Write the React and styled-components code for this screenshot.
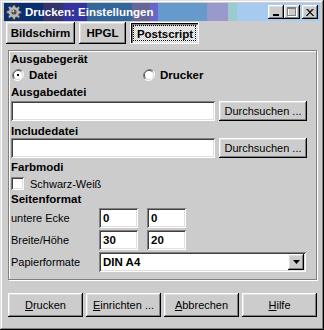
import React from "react";
import styled, { createGlobalStyle, css } from "styled-components";

const GlobalStyle = createGlobalStyle`
  html, body {
    margin: 0;
    padding: 0;
    background: #cccccc;
  }
  body {
    font-family: "Liberation Sans", Arial, sans-serif;
    font-size: 11px;
    color: #000;
  }
  * {
    box-sizing: border-box;
  }
`;

const bevel = css`
  background-color: #cccccc;
  box-shadow: inset -1px -1px #000, inset 1px 1px #fff, inset -2px -2px #808080,
    inset 2px 2px #dfdfdf;
`;

const sunken = css`
  background-color: #fff;
  box-shadow: inset 1px 1px #808080, inset -1px -1px #fff, inset 2px 2px #404040,
    inset -2px -2px #dfdfdf;
`;

const Window = styled.div`
  width: 324px;
  height: 330px;
  padding: 3px 4px 0 4px;
  background: #cccccc;
  box-shadow: inset -1px -1px #000, inset 1px 1px #dfdfdf, inset -2px -2px #808080,
    inset 2px 2px #fff;
  display: flex;
  flex-direction: column;
`;

const TitleBar = styled.div`
  height: 18px;
  display: flex;
  align-items: center;
  padding: 0 2px;
  gap: 3px;
  background: linear-gradient(
    to right,
    #0a2e6e 0 39px,
    #33336e 39px 59px,
    #3333a0 59px 83px,
    #336699 83px 128px,
    #666699 128px 146px,
    #6666cc 146px 154px,
    #6699cc 154px 203px,
    #9999cc 203px 224px,
    #99cccc 224px 233px,
    #a6caf0 233px
  );
`;

const Title = styled.span`
  flex: 1;
  color: #fff;
  font-weight: bold;
  font-size: 11.5px;
  white-space: nowrap;
`;

const Controls = styled.div`
  display: flex;
  align-items: center;
`;

const ControlButton = styled.div`
  ${bevel};
  width: 16px;
  height: 14px;
  display: flex;
  align-items: center;
  justify-content: center;
  margin-left: ${(p) => p.$gap || 0}px;
`;

const TabRow = styled.div`
  display: flex;
  gap: 4px;
  margin-top: 1px;
  padding-left: 2px;
`;

const TabButton = styled.div`
  width: ${(p) => p.$width}px;
  height: 22px;
  display: flex;
  align-items: center;
  justify-content: center;
  font-weight: bold;
  font-size: 11.5px;
  ${(p) =>
    p.$pressed
      ? css`
          border: 1px solid #fff;
          background-color: #fff;
          background-image: repeating-conic-gradient(#cccccc 0 25%, #fff 0 50%);
          background-size: 2px 2px;
          box-shadow: inset 1px 1px #000, inset 2px 2px #808080;
          outline: 1px dotted #000;
          outline-offset: -4px;
          padding-top: 1px;
          padding-left: 1px;
        `
      : bevel}
`;

const Group = styled.div`
  margin: 6px 3px 0 4px;
  height: 230px;
  border: 1px solid #808080;
  box-shadow: inset 1px 1px #fff, 1px 1px #fff;
  padding: 1px 0 0 2px;
  display: flex;
  flex-direction: column;
`;

const Heading = styled.div`
  font-weight: bold;
  font-size: 11.5px;
  line-height: 14px;
  margin-top: ${(p) => p.$gap || 0}px;
`;

const RadioRow = styled.div`
  display: flex;
  height: 18px;
  align-items: center;
`;

const RadioOption = styled.label`
  display: flex;
  align-items: center;
  width: ${(p) => p.$width || "auto"};
  padding-left: 1px;
  font-weight: bold;
  font-size: 11.5px;
`;

const RadioCircle = styled.span`
  width: 12px;
  height: 12px;
  margin-right: 5px;
  display: inline-flex;
`;

const FileRow = styled.div`
  display: flex;
  gap: 4px;
  height: 20px;
  margin-top: ${(p) => p.$gap || 0}px;
`;

const Field = styled.div`
  ${sunken};
  width: ${(p) => p.$width}px;
  height: 20px;
  padding: 3px 4px 0;
  font-weight: bold;
  font-size: 11.5px;
  line-height: 14px;
`;

const PushButton = styled.div`
  ${bevel};
  width: ${(p) => p.$width}px;
  height: ${(p) => p.$height || 20}px;
  display: flex;
  align-items: center;
  justify-content: center;
  font-size: 11px;
  padding-bottom: 1px;
`;

const CheckRow = styled.div`
  display: flex;
  align-items: center;
  height: 17px;
  margin-top: 1px;
`;

const CheckBox = styled.span`
  ${sunken};
  width: 13px;
  height: 13px;
  margin-right: 6px;
`;

const FormRow = styled.div`
  display: flex;
  align-items: center;
  height: 20px;
  margin-top: ${(p) => p.$gap || 0}px;
`;

const FieldLabel = styled.span`
  width: 88px;
  font-size: 11px;
`;

const Pair = styled.div`
  display: flex;
  gap: 9px;
`;

const Select = styled.div`
  ${sunken};
  width: 207px;
  height: 20px;
  display: flex;
  align-items: center;
  justify-content: space-between;
  padding: 2px 2px 2px 4px;
  font-weight: bold;
  font-size: 11.5px;
`;

const SelectArrow = styled.div`
  ${bevel};
  width: 16px;
  height: 16px;
  display: flex;
  align-items: center;
  justify-content: center;
`;

const Footer = styled.div`
  display: flex;
  gap: 3px;
  margin-top: 13px;
  padding-left: 4px;
`;

const Gear = () => (
  <svg width="16" height="16" viewBox="0 0 16 16">
    <g fill="#b8b8b8" stroke="#404040" strokeWidth="0.8">
      <path d="M7 1h2l.4 2 1.4.6 1.7-1.2 1.4 1.4-1.2 1.7.6 1.4 2 .4v2l-2 .4-.6 1.4 1.2 1.7-1.4 1.4-1.7-1.2-1.4.6-.4 2H7l-.4-2-1.4-.6-1.7 1.2-1.4-1.4 1.2-1.7-.6-1.4-2-.4V7l2-.4.6-1.4-1.2-1.7 1.4-1.4 1.7 1.2 1.4-.6z" />
    </g>
    <circle cx="8" cy="8" r="2.6" fill="#505050" />
    <circle cx="7.3" cy="7.3" r="1" fill="#e0e0e0" />
  </svg>
);

const Radio = ({ checked }) => (
  <RadioCircle>
    <svg width="12" height="12" viewBox="0 0 12 12">
      <path d="M10.2 1.8A6 6 0 0 0 1.8 10.2" fill="none" stroke="#808080" />
      <path d="M1.8 10.2A6 6 0 0 0 10.2 1.8" fill="none" stroke="#fff" />
      <path d="M9.5 2.5A5 5 0 0 0 2.5 9.5" fill="none" stroke="#404040" />
      <path d="M2.5 9.5A5 5 0 0 0 9.5 2.5" fill="none" stroke="#dfdfdf" />
      <circle cx="6" cy="6" r="4" fill="#fff" />
      {checked && <rect x="5" y="5" width="2" height="2" fill="#000" />}
    </svg>
  </RadioCircle>
);

const App = () => {
  return (
    <Window>
      <GlobalStyle />
      <TitleBar>
        <Gear />
        <Title>Drucken: Einstellungen</Title>
        <Controls>
          <ControlButton>
            <svg width="8" height="7" viewBox="0 0 8 7">
              <rect x="1" y="5" width="6" height="2" fill="#000" />
            </svg>
          </ControlButton>
          <ControlButton>
            <svg width="10" height="10" viewBox="0 0 10 10">
              <rect x="1.5" y="1.5" width="8" height="8" fill="none" stroke="#fff" />
              <rect x="0.5" y="0.5" width="8" height="8" fill="none" stroke="#808080" />
              <line x1="0" y1="1.5" x2="9" y2="1.5" stroke="#808080" />
            </svg>
          </ControlButton>
          <ControlButton $gap={2}>
            <svg width="8" height="7" viewBox="0 0 8 7">
              <path d="M0.5 0l7 7M7.5 0l-7 7M1.5 0l6 7M6.5 0l-6 7" stroke="#000" strokeWidth="1" />
            </svg>
          </ControlButton>
        </Controls>
      </TitleBar>

      <TabRow>
        <TabButton $width={69}>Bildschirm</TabButton>
        <TabButton $width={47}>HPGL</TabButton>
        <TabButton $width={69} $pressed>
          Postscript
        </TabButton>
      </TabRow>

      <Group>
        <Heading>Ausgabegerät</Heading>
        <RadioRow>
          <RadioOption $width="131px">
            <Radio checked />
            Datei
          </RadioOption>
          <RadioOption>
            <Radio />
            Drucker
          </RadioOption>
        </RadioRow>
        <Heading $gap={1}>Ausgabedatei</Heading>
        <FileRow $gap={2}>
          <Field $width={204} />
          <PushButton $width={88}>Durchsuchen ...</PushButton>
        </FileRow>
        <Heading $gap={3}>Includedatei</Heading>
        <FileRow>
          <Field $width={204} />
          <PushButton $width={88}>Durchsuchen ...</PushButton>
        </FileRow>
        <Heading $gap={2}>Farbmodi</Heading>
        <CheckRow>
          <CheckBox />
          Schwarz-Weiß
        </CheckRow>
        <Heading>Seitenformat</Heading>
        <FormRow $gap={2}>
          <FieldLabel>untere Ecke</FieldLabel>
          <Pair>
            <Field $width={39}>0</Field>
            <Field $width={39}>0</Field>
          </Pair>
        </FormRow>
        <FormRow $gap={2}>
          <FieldLabel>Breite/Höhe</FieldLabel>
          <Pair>
            <Field $width={39}>30</Field>
            <Field $width={39}>20</Field>
          </Pair>
        </FormRow>
        <FormRow $gap={2}>
          <FieldLabel>Papierformate</FieldLabel>
          <Select>
            DIN A4
            <SelectArrow>
              <svg width="7" height="4" viewBox="0 0 7 4">
                <path d="M0 0h7L3.5 4z" fill="#000" />
              </svg>
            </SelectArrow>
          </Select>
        </FormRow>
      </Group>

      <Footer>
        <PushButton $width={75} $height={24}>
          <u>D</u>rucken
        </PushButton>
        <PushButton $width={75} $height={24}>
          <u>E</u>inrichten ...
        </PushButton>
        <PushButton $width={75} $height={24}>
          <u>A</u>bbrechen
        </PushButton>
        <PushButton $width={75} $height={24}>
          <u>H</u>ilfe
        </PushButton>
      </Footer>
    </Window>
  );
};

export default App;
